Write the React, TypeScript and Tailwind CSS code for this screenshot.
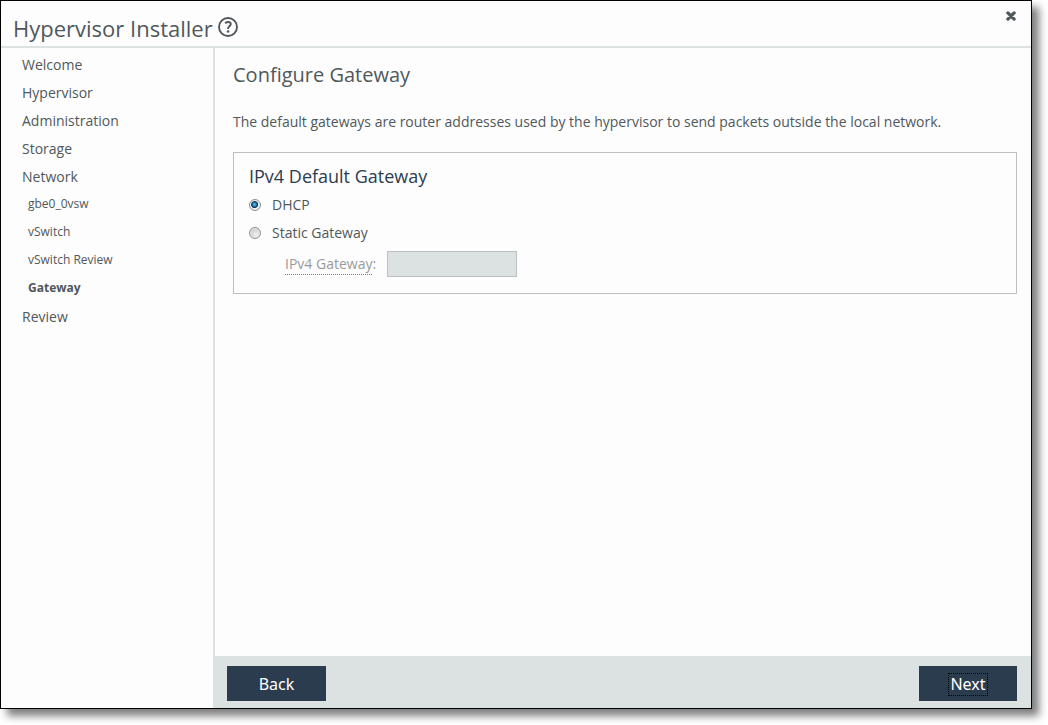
import React, { useState } from 'react';
import clsx from 'clsx';

const steps = [
  { label: 'Welcome' },
  { label: 'Hypervisor' },
  { label: 'Administration' },
  { label: 'Storage' },
  { label: 'Network' },
  { label: 'gbe0_0vsw', sub: true },
  { label: 'vSwitch', sub: true },
  { label: 'vSwitch Review', sub: true },
  { label: 'Gateway', sub: true, current: true },
  { label: 'Review' },
];

const radioClass =
  'h-3 w-3 shrink-0 appearance-none rounded-full border border-[#8c9092] bg-[radial-gradient(circle_at_60%_65%,#f4f4f4_0%,#c4c6c8_75%)] shadow-[inset_0_0_0_1px_#f0f0f0] checked:bg-[radial-gradient(circle_at_45%_45%,#5cc4f0_0,#1c78b8_2px,#0b2a4a_3px,#e8ecee_4px)]';

const buttonClass =
  "flex h-[35px] items-center justify-center bg-[#2c3c4f] pt-[2px] font-['Noto_Sans',sans-serif] text-base text-white hover:bg-[#3a4d63]";

function HelpIcon() {
  return (
    <svg viewBox="0 0 20 20" className="h-5 w-5" fill="none" stroke="currentColor" aria-hidden="true">
      <circle cx="10" cy="10" r="9" strokeWidth="1.9" />
      <path d="M7.1 6.2c1-.8 2-1.2 3-1.2 1.6 0 2.7.8 2.7 2.1 0 2-2.7 2.2-2.7 4.4v.6" strokeWidth="1.9" />
      <circle cx="10.1" cy="14.5" r="1.3" fill="currentColor" stroke="none" />
    </svg>
  );
}

function CloseIcon() {
  return (
    <svg viewBox="0 0 10 10" className="h-[10px] w-[10px]" stroke="currentColor" aria-hidden="true">
      <path d="M1.9 1.9l6.2 6.2M8.1 1.9L1.9 8.1" strokeWidth="3.3" strokeLinecap="round" />
    </svg>
  );
}

function Sidebar() {
  return (
    <nav className="w-[214px] shrink-0 border-r-2 border-[#dce1e1] pt-[3px]">
      <ul>
        {steps.map(step => (
          <li key={step.label} className={clsx('flex h-7 items-center', step.sub ? 'pb-[2px] pl-[27px] text-xs' : 'pl-[21px] text-sm')}>
            <a href="#" aria-current={step.current ? 'step' : undefined} className={clsx('hover:underline', step.current && 'font-bold')}>
              {step.label}
            </a>
          </li>
        ))}
      </ul>
    </nav>
  );
}

export default function App() {
  const [mode, setMode] = useState('dhcp');
  const [gateway, setGateway] = useState('');
  const isStatic = mode === 'static';

  return (
    <div className="h-screen bg-white pr-4 pb-4 font-['Open_Sans',sans-serif] text-[#50585b]">
      <div className="flex h-full flex-col border border-black bg-[#fdfdfd] shadow-[7px_7px_8px_rgba(0,0,0,0.5)]">
        <header className="flex h-[47px] shrink-0 items-start justify-between border-b-2 border-[#dce1e1] pr-[15px] pl-3">
          <div className="flex items-center gap-[5px] pt-[11px]">
            <h1 className="text-[22px] leading-8">Hypervisor Installer</h1>
            <button type="button" aria-label="Help" className="pb-[2px]">
              <HelpIcon />
            </button>
          </div>
          <button type="button" aria-label="Close" className="pt-[10px]">
            <CloseIcon />
          </button>
        </header>

        <div className="flex min-h-0 flex-1">
          <Sidebar />

          <div className="flex min-w-0 flex-1 flex-col">
            <main className="flex-1 overflow-auto pt-3 pr-[14px] pl-[18px]">
              <h2 className="text-xl leading-[30px]">Configure Gateway</h2>
              <p className="mt-[22px] text-sm">
                The default gateways are router addresses used by the hypervisor to send packets outside the local network.
              </p>

              <fieldset className="mt-5 border border-[#bcc0c2] px-[15px] pt-2 pb-4">
                <h3 className="text-lg leading-[30px] text-[#2c3c4f]">IPv4 Default Gateway</h3>
                <label className="flex h-7 items-center gap-[11px] text-sm">
                  <input type="radio" name="mode" checked={!isStatic} onChange={() => setMode('dhcp')} className={radioClass} />
                  DHCP
                </label>
                <label className="flex h-7 items-center gap-[11px] text-sm">
                  <input type="radio" name="mode" checked={isStatic} onChange={() => setMode('static')} className={radioClass} />
                  Static Gateway
                </label>
                <div className="mt-1 flex items-center gap-[11px] pl-9 text-sm">
                  <label htmlFor="gateway" className={clsx(!isStatic && 'text-[#999b9c]')}>
                    <span className="border-b border-dotted border-[#777] pb-px">IPv4 Gateway</span>:
                  </label>
                  <input
                    id="gateway"
                    type="text"
                    value={gateway}
                    disabled={!isStatic}
                    onChange={e => setGateway(e.target.value)}
                    className="h-[26px] w-[130px] border border-[#bcc0c2] px-2 disabled:bg-[#dce1e1]"
                  />
                </div>
              </fieldset>
            </main>

            <footer className="flex h-[52px] shrink-0 items-center justify-between bg-[#dce1e1] pt-[2px] pr-[14px] pl-3">
              <button type="button" className={clsx(buttonClass, 'w-[99px]')}>
                Back
              </button>
              <button type="button" className={clsx(buttonClass, 'w-[98px]')}>
                <span className="border border-dotted border-black px-px leading-[21px]">Next</span>
              </button>
            </footer>
          </div>
        </div>
      </div>
    </div>
  );
}
